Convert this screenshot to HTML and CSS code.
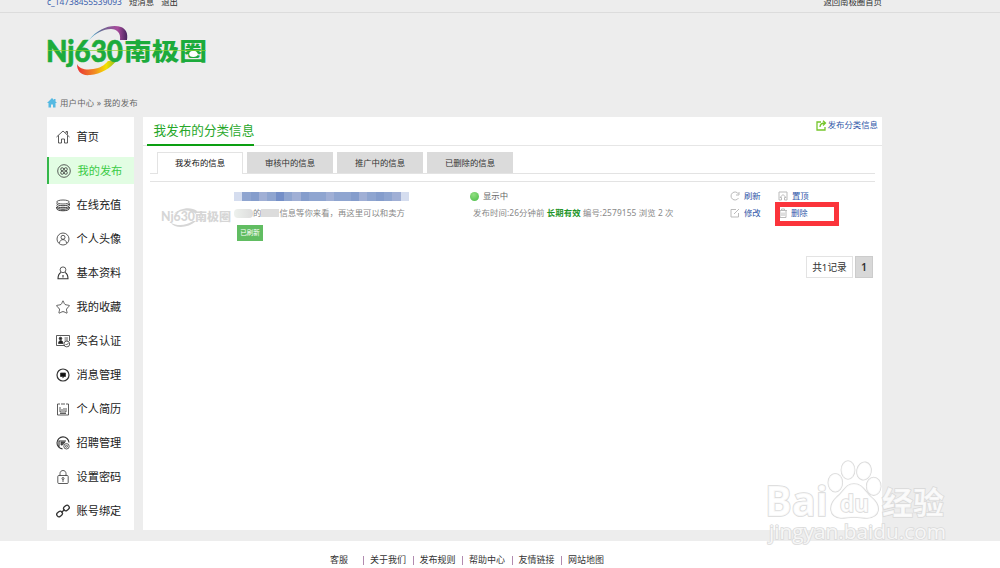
FILE: index.html
```
<!DOCTYPE html>
<html>
<head>
<meta charset="utf-8">
<title>我发布的分类信息</title>
<link rel="stylesheet" href="styles.css">
</head>
<body>
<div class="topbar"><div class="wrap topbar-in"><a class="user">c_14738455539093</a><a>短消息</a><a>退出</a><a class="home-link">返回南极圈首页</a></div></div>
<header class="wrap header">
<svg class="logo" viewBox="0 0 164 54">
<defs>
<linearGradient id="arcTop"><stop offset="0" stop-color="#45b9dc"/><stop offset=".35" stop-color="#6d6591"/><stop offset=".75" stop-color="#a84b9c"/><stop offset="1" stop-color="#47245d"/></linearGradient>
<linearGradient id="arcBottom"><stop offset="0" stop-color="#e93236"/><stop offset=".45" stop-color="#f18a22"/><stop offset=".75" stop-color="#f6e000"/><stop offset="1" stop-color="#8abb23"/></linearGradient>
</defs>
<path fill="url(#arcTop)" d="M42 15C51 3 65-1 74 2c5 2 7 6 6 13h-7C74 8 70 4 64 4 56 4 49 8 42 15z"/>
<path fill="url(#arcBottom)" d="M30 39c3 7 14 6 21 4 6-2 8-5 10-7h8c-5 7-15 13-26 14-9 1-13-4-13-11z"/>
<text class="logo-latin" x="-1" y="37" textLength="77" lengthAdjust="spacingAndGlyphs">Nj630</text>
<text class="logo-cjk" x="77" y="34.500" textLength="83" lengthAdjust="spacingAndGlyphs">南极圈</text>
<ellipse cx="146.300" cy="29" rx="4.200" ry="3" fill="#fff"/>
<path d="M1 25.500H159" stroke="#8bd330" stroke-width=".7"/>
</svg>
<div class="crumb"><svg viewBox="0 0 10 10"><path d="M5 0 0 5h1.500v4.500H4V6.500h2v3h2.500V5H10L8.500 3.500V1H7v1z" fill="#55b9e2"/></svg>用户中心 » 我的发布</div>
</header>
<div class="wrap columns">
<nav class="side">
<a><svg viewBox="0 0 14 14"><path d="M.5 7 7 1l6.500 6M2.500 5.500V13h3V9h3v4h3V5.500M10 3V1.500h1.500v3"/></svg>首页</a>
<a class="on"><svg viewBox="0 0 14 14"><circle cx="7" cy="7" r="6.300"/><circle cx="5.200" cy="5.200" r="1.500"/><circle cx="8.800" cy="5.200" r="1.500"/><circle cx="5.200" cy="8.800" r="1.500"/><circle cx="8.800" cy="8.800" r="1.500"/></svg>我的发布</a>
<a><svg viewBox="0 0 14 14"><ellipse cx="7" cy="4" rx="6.300" ry="2"/><path d="M.7 5.500c0 3 12.600 3 12.600 0V7.500c0 3-12.600 3-12.600 0M.7 9c0 3 12.600 3 12.600 0v1.500c0 3-12.600 3-12.600 0z" stroke-width="1"/></svg>在线充值</a>
<a><svg viewBox="0 0 14 14"><circle cx="7" cy="7" r="6"/><circle cx="7" cy="5.300" r="2"/><path d="M3.500 11c.3-4.500 6.700-4.500 7 0"/></svg>个人头像</a>
<a><svg viewBox="0 0 14 14"><circle cx="7" cy="3.800" r="2.900"/><path d="M5 6.500C3 7.500 2 9 2 12.800h10C12 9 11 7.500 9 6.500M7 9v2.500" stroke-width="1.100"/></svg>基本资料</a>
<a><svg viewBox="0 0 14 14"><path d="M7 .8c.5 0 .9 2.900 2.100 3.700 1 .6 4.200.6 4.400 1.200.2.500-2.700 2.300-3 3.400-.3 1.300 1 3.600.5 4-.5.300-2.700-1.500-4-1.500s-3.500 1.800-4 1.500c-.5-.4.800-2.700.5-4C3.200 8 .3 6.200.5 5.700c.2-.6 3.400-.6 4.400-1.200C6.100 3.700 6.500.8 7 .8z"/></svg>我的收藏</a>
<a><svg viewBox="0 0 14 14"><path d="M13.500 7V1.500H.5v10h8M8.500 4H12M8.500 6H12"/><circle cx="4.500" cy="4.500" r="1.300" fill="#222"/><path d="M2.500 9.500c0-4 4.500-4 4.500 0z" fill="#222"/><circle cx="10.800" cy="10" r="2.900"/><path d="m9.500 10 1 1 2-2"/></svg>实名认证</a>
<a><svg viewBox="0 0 14 14"><circle cx="7" cy="7" r="6" stroke-width="1.200"/><path d="M4.500 5h5v3.500H8L6.800 9.700V8.500H4.500z" fill="#111"/></svg>消息管理</a>
<a><svg viewBox="0 0 14 14"><path d="M4 2H1.500v11h11V2H10M5 2h4M4 5v5h6V6M6 7v2M8 6v3M4 11.500h6"/></svg>个人简历</a>
<a><svg viewBox="0 0 14 14"><path d="M6.500 12.900A6 6 0 1 1 13 6.500M3 11V5h7" stroke-width="1.100"/><path d="M5 6h4l-2.500 3H5z" fill="#555"/><circle cx="10.500" cy="10.300" r="2.700"/><circle cx="10.500" cy="10.300" r="1"/></svg>招聘管理</a>
<a><svg viewBox="0 0 14 14"><rect x="1.800" y="5.500" width="10.400" height="8" rx="1"/><path d="M4 5.500V3.500c0-4 6-4 6 0v2M7 9.500V12"/><circle cx="7" cy="8.500" r="1"/></svg>设置密码</a>
<a><svg viewBox="0 0 14 14"><g stroke-width="1.300"><rect x="-3" y="-2.200" width="6" height="4.400" rx="2.200" transform="translate(3.600 10) rotate(-40)"/><rect x="-3" y="-2.200" width="6" height="4.400" rx="2.200" transform="translate(10.400 4) rotate(-40)"/><path d="m5.500 8.500 3-3"/></g></svg>账号绑定</a>
</nav>
<main class="main">
<div class="title"><h1>我发布的分类信息</h1><a class="publish"><svg viewBox="0 0 11 11"><path d="M5 2H1v8h8V7M4 7c0-3 2-4 5-4M7 .800 9.500 3 7 5.500" fill="none" stroke="#76c62c" stroke-width="1.300"/></svg>发布分类信息</a></div>
<div class="tabs"><a class="cur">我发布的信息</a><a>审核中的信息</a><a>推广中的信息</a><a>已删除的信息</a></div>
<div class="item">
<svg class="thumb" viewBox="0 0 70 20"><path d="M13 6C18 0 30-2 36 3l-1 3C29 1 20 2 13 6zM10 15c6 3 15 3 22-2h3c-7 7-21 8-25 2z" fill="#d6d6d6"/><text x="0" y="13" textLength="34" lengthAdjust="spacingAndGlyphs">Nj630</text><text class="tc" x="34" y="12.500" textLength="36" lengthAdjust="spacingAndGlyphs">南极圈</text></svg>
<div class="info"><div class="mosaic"><i></i><i></i><i></i><i></i><i></i><i></i><i></i><i></i><i></i><i></i><i></i><i></i><i></i><i></i><i></i><i></i><i></i><i></i><i></i><i></i><i></i></div><div class="desc"><span class="smudge"></span>的<span class="smudge2"></span>信息等你来看，再这里可以和卖方</div><span class="badge">已刷新</span></div>
<div class="state"><div class="showing"><span class="dot"></span>显示中</div><div class="meta">发布时间:26分钟前 <b>长期有效</b> 编号:2579155 浏览 2 次</div></div>
<div class="acts">
<a><svg viewBox="0 0 10 10"><path d="M8.500 3A4 4 0 1 0 8.500 7M9 1v3H6"/></svg>刷新</a><a class="pin"><svg viewBox="0 0 10 10"><path d="M3.500 9H1V1h8v8H6.500V6.500H8L5 3.500l-3 3h1.500z"/></svg>置顶</a>
<a><svg viewBox="0 0 10 10"><path d="M6 1.500H1V9h7.500V5M4 6l5-5"/></svg>修改</a><a class="del"><svg viewBox="0 0 10 10"><path d="M1 2.500h8M3.500 2V1h3v1M2 3v6.500h6V3M4 4.500V8M6 4.500V8"/></svg>删除</a>
<span class="mark"></span>
</div>
</div>
<div class="pages"><span>共1记录</span><b>1</b></div>
</main>
</div>
<footer class="footer"><span class="first">客服</span><span>关于我们</span><span>发布规则</span><span>帮助中心</span><span>友情链接</span><span>网站地图</span></footer>
<svg class="watermark" viewBox="0 0 190 100">
<g class="wm">
<text class="wm-b" x="5" y="70" textLength="63" lengthAdjust="spacingAndGlyphs">Bai</text>
<ellipse cx="75.300" cy="36.700" rx="7" ry="9"/><ellipse cx="88" cy="24" rx="6.600" ry="9"/><ellipse cx="104" cy="25" rx="7" ry="8.800" transform="rotate(12 104 25)"/><ellipse cx="113.700" cy="40.300" rx="7" ry="8.800"/>
<path d="M94 38c9 0 11 8 17 13 11 9 9 20-4 21-5 0-8-1-13-1s-8 1-13 1c-12-1-13-13-4-21 7-5 8-13 17-13z"/>
<text class="wm-d" x="80" y="65.700" textLength="29" lengthAdjust="spacingAndGlyphs">du</text>
<text class="wm-c" x="122" y="67.500" textLength="62" lengthAdjust="spacingAndGlyphs">经验</text>
<text class="wm-u" x="9" y="93.300" textLength="177" lengthAdjust="spacingAndGlyphs">jingyan.baidu.com</text>
</g></svg>
</body>
</html>
```
FILE: styles.css
```
* { box-sizing: border-box; }
body { margin: 0; width: 1000px; height: 568px; overflow: hidden; position: relative; background: #ededed; color: #333; font: 8.4px/12px "Noto Sans", "Noto Sans CJK SC", sans-serif; display: flex; flex-direction: column; }
.wrap { width: 835px; margin-left: 47px; }
.topbar { height: 13px; flex: none; border-bottom: 1px solid #dcdcdc; }
.topbar-in { display: flex; gap: 7px; margin-top: -4px; }
.topbar .user { color: #3c61ad; width: 75px; white-space: nowrap; }
.topbar .home-link { margin-left: auto; }
.header { height: 104px; flex: none; padding-top: 12px; }
.logo { display: block; width: 164px; height: 54px; overflow: visible; }
.logo-latin { font: 900 30px Lato, sans-serif; fill: #1cab3c; stroke: #1cab3c; stroke-width: .6; }
.logo-cjk { font: 900 23.500px "Noto Sans CJK SC", sans-serif; fill: #1cab3c; }
.crumb { display: flex; align-items: center; gap: 3px; margin-top: 18px; color: #666; letter-spacing: .2px; white-space: pre; }
.crumb svg { width: 10px; height: 10px; }
.columns { display: flex; gap: 9px; height: 413px; flex: none; }
.side { width: 87px; background: #fff; display: flex; flex-direction: column; gap: 7px; padding-top: 6px; }
.side a { height: 27px; display: flex; align-items: center; gap: 7px; padding-left: 8.500px; font-size: 11.200px; line-height: 16px; color: #222; flex: none; }
.side .on { background: #e2fde3; border-left: 2px solid #35b74a; padding-left: 7.500px; color: #3acb45; }
.side svg { width: 14px; height: 14px; fill: none; stroke: #333; stroke-width: .8; }
.main { width: 739px; background: #fff; }
.title { height: 29px; border-bottom: 1px solid #e6e6e6; display: flex; justify-content: space-between; padding: 0 4px; }
.title h1 { margin: 0; height: 29px; padding-left: 6.500px; font-size: 12.600px; line-height: 27px; font-weight: 400; color: #27a72a; border-bottom: 2px solid #0c9f12; width: 107px; white-space: nowrap; }
.publish { display: flex; gap: 1px; height: 16px; align-items: center; color: #2f57a8; }
.publish svg { width: 11px; height: 11px; }
.tabs { display: flex; gap: 4px; margin: 6px 7px 0; height: 22px; padding-left: 7px; border-bottom: 1px solid #e3e3e3; }
.tabs a { width: 86px; height: 21px; line-height: 21px; background: #dbdbdb; text-align: center; }
.tabs .cur { height: 22px; line-height: 20px; background: #fff; border: 1px solid #e3e3e3; border-bottom: 0; color: #111; }
.item { margin: 7px 7px 0; border-top: 1px solid #e3e3e3; height: 75px; display: flex; padding: 8px 0 0 11px; }
.thumb { width: 70px; height: 20px; margin-top: 18px; flex: none; overflow: visible; }
.thumb text { font: 900 13.500px Lato, sans-serif; fill: #d6d6d6; }
.thumb .tc { font: 900 11px "Noto Sans CJK SC", sans-serif; }
.info { width: 239px; padding: 2px 0 0 3px; flex: none; }
.mosaic { display: flex; width: 175px; height: 9px; }
.mosaic i { flex: 1; background: #8fa5d0; }
.mosaic i:nth-child(3n) { background: #859dcc; }
.mosaic i:nth-child(4n) { background: #a0afd5; }
.mosaic i:nth-child(6) { background: #748fc8; }
.mosaic i:first-child, .mosaic i:last-child { background: #d5ddef; }
.desc { display: flex; align-items: center; margin-top: 5px; height: 14px; color: #888; white-space: nowrap; }
.smudge { width: 19px; height: 9px; border-radius: 4px; background: linear-gradient(90deg, #edf1ed, #ddd); }
.smudge2 { width: 18px; height: 8px; background: #dcdcdc; }
.badge { display: block; width: 26px; height: 16px; margin: 5px 0 0 3px; background: #61bd62; color: #fff; text-align: center; font-size: 6.500px; line-height: 16px; }
.state { width: 260px; flex: none; color: #666; }
.showing { display: flex; align-items: center; gap: 4px; height: 12px; }
.dot { width: 9px; height: 9px; border-radius: 50%; background: radial-gradient(circle at 40% 30%, #92df82, #48bc46); }
.meta { padding-left: 3px; margin-top: 5px; color: #888; white-space: nowrap; letter-spacing: .1px; }
.meta b { color: #229529; }
.acts { position: relative; display: grid; grid-template-columns: 48px 60px; grid-auto-rows: 17px; color: #2f57a8; }
.acts a { display: flex; gap: 4px; align-items: center; height: 12px; }
.acts .del { gap: 3px; }
.acts svg { width: 10px; height: 10px; fill: none; stroke: #bbb; stroke-width: 1; }
.mark { position: absolute; left: 45px; top: 12px; width: 64px; height: 24px; border: 5px solid #fb343b; }
.pages { display: flex; justify-content: flex-end; gap: 2px; padding-right: 9px; }
.pages span { width: 47px; height: 22px; line-height: 21px; border: 1px solid #e3e3e3; text-align: center; font-size: 9.700px; }
.pages b { width: 18px; height: 22px; line-height: 20px; background: #d8d8d8; border: 1px solid #ccc; text-align: center; font-size: 10.500px; font-weight: 600; }
.footer { flex: 1; margin-top: 11px; background: #fff; display: flex; padding: 13px 0 0 330px; font-size: 9px; }
.footer span { width: 49.500px; white-space: nowrap; }
.footer .first { width: 40px; }
.footer span:not(.first)::before { content: ""; display: inline-block; width: 1px; height: 9px; margin: 0 6px -2px -7px; background: #b28bb0; }
.watermark { position: absolute; left: 760px; top: 446px; width: 190px; height: 100px; overflow: visible; }
.wm text, .wm ellipse, .wm path { fill: #fff; fill-opacity: .8; stroke: #dadada; stroke-width: 1.600; paint-order: stroke; }
.wm .wm-b { font: 700 41px "Open Sans", sans-serif; }
.wm .wm-d { font: 700 24px "Open Sans", sans-serif; }
.wm .wm-c { font: 700 31px "Noto Sans CJK SC", sans-serif; }
.wm .wm-u { font: 400 20px "Open Sans", sans-serif; }
```
